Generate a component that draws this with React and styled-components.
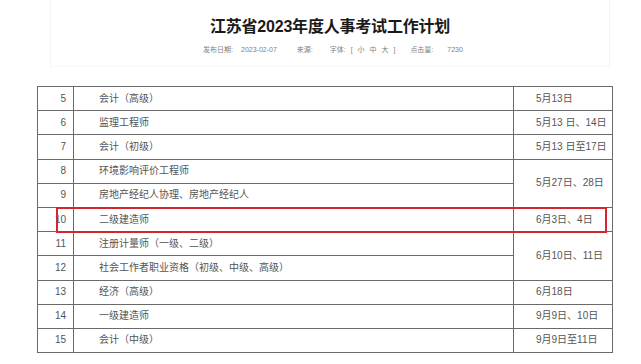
import React from "react";
import styled, { createGlobalStyle } from "styled-components";

const Global = createGlobalStyle`
  html, body { margin: 0; padding: 0; background: #fff; }
  body { font-family: "Liberation Sans", "Noto Sans CJK SC", sans-serif; color: #333; }
`;

const Page = styled.div`
  width: 641px;
  height: 364px;
  overflow: hidden;
  background: #fff;
`;

const HeaderCard = styled.div`
  width: 560px;
  height: 67px;
  margin: 0 0 0 50px;
  box-sizing: border-box;
  border-left: 1px solid #f4f4f4;
  border-right: 1px solid #f4f4f4;
  border-bottom: 1px solid #f8f8f8;
  display: flex;
  flex-direction: column;
  align-items: center;
  padding-top: 16px;
`;

const Title = styled.h1`
  margin: 0;
  font-family: "Liberation Sans", "Noto Sans CJK SC", sans-serif;
  font-size: 16px;
  line-height: 22px;
  font-weight: 700;
  color: #1a1a1a;
  letter-spacing: -0.2px;
`;

const Meta = styled.div`
  display: flex;
  align-items: center;
  margin-top: 7px;
  margin-left: 6px;
  font-size: 7px;
  line-height: 10px;
  color: #808080;
`;

const MetaItem = styled.span`
  margin-left: ${(p) => p.$gap || 0}px;
  word-spacing: ${(p) => p.$ws || 0}px;
`;

const TableWrap = styled.div`
  position: relative;
  margin: 19px 0 0 37px;
  width: 575px;
`;

const Table = styled.table`
  border-collapse: collapse;
  width: 575px;
  table-layout: fixed;
  font-size: 10px;
  color: #555;
`;

const Row = styled.tr`
  height: 24.2px;
`;

const Cell = styled.td`
  border: 1px solid #6a6a6a;
  padding: 0;
  padding-left: ${(p) => p.$pl || 0}px;
  padding-right: ${(p) => p.$pr || 0}px;
  text-align: ${(p) => p.$align || "left"};
  vertical-align: middle;
  white-space: nowrap;
  line-height: 14px;
`;

const Highlight = styled.div`
  position: absolute;
  left: 19px;
  top: 121px;
  width: 551px;
  height: 26px;
  box-sizing: border-box;
  border: 2px solid #d3262e;
  pointer-events: none;
`;

const rows = [
  { n: 5, name: "会计（高级）", date: "5月13日" },
  { n: 6, name: "监理工程师", date: "5月13 日、14日" },
  { n: 7, name: "会计（初级）", date: "5月13 日至17日" },
  { n: 8, name: "环境影响评价工程师", date: "5月27日、28日", span: 2 },
  { n: 9, name: "房地产经纪人协理、房地产经纪人", skip: true },
  { n: 10, name: "二级建造师", date: "6月3日、4日" },
  { n: 11, name: "注册计量师（一级、二级）", date: "6月10日、11日", span: 2 },
  { n: 12, name: "社会工作者职业资格（初级、中级、高级）", skip: true },
  { n: 13, name: "经济（高级）", date: "6月18日" },
  { n: 14, name: "一级建造师", date: "9月9日、10日" },
  { n: 15, name: "会计（中级）", date: "9月9日至11日" },
];

export default function App() {
  return (
    <Page>
      <Global />
      <HeaderCard>
        <Title>江苏省2023年度人事考试工作计划</Title>
        <Meta>
          <MetaItem>发布日期:</MetaItem>
          <MetaItem $gap={8}>2023-02-07</MetaItem>
          <MetaItem $gap={20}>来源:</MetaItem>
          <MetaItem $gap={17} $ws={3}>字体: [ 小 中 大 ]</MetaItem>
          <MetaItem $gap={15}>点击量:</MetaItem>
          <MetaItem $gap={14}>7230</MetaItem>
        </Meta>
      </HeaderCard>
      <TableWrap>
        <Table>
          <colgroup>
            <col style={{ width: 36 }} />
            <col style={{ width: 440 }} />
            <col style={{ width: 99 }} />
          </colgroup>
          <tbody>
            {rows.map((r) => (
              <Row key={r.n}>
                <Cell $align="right" $pr={7}>{r.n}</Cell>
                <Cell $pl={25}>{r.name}</Cell>
                {!r.skip && (
                  <Cell $pl={22} rowSpan={r.span || 1}>
                    {r.date}
                  </Cell>
                )}
              </Row>
            ))}
          </tbody>
        </Table>
        <Highlight />
      </TableWrap>
    </Page>
  );
}
